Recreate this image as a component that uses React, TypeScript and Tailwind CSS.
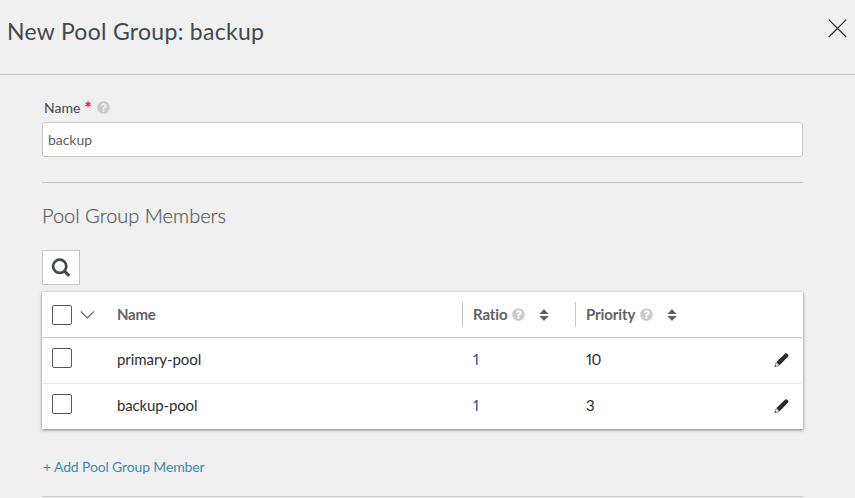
import React from "react";
import { FaQuestionCircle } from "react-icons/fa";

function Help({ className = "" }: { className?: string }) {
  return <FaQuestionCircle className={`size-[13px] shrink-0 text-[#cbcbcb] ${className}`} />;
}

function SortIcon({ className = "" }: { className?: string }) {
  return (
    <svg viewBox="0 0 10 12" className={`h-3 w-[10px] shrink-0 ${className}`} fill="#606365">
      <path d="M5 0L9.7 5H.3zM5 12L.3 7h9.4z" />
    </svg>
  );
}

function Checkbox() {
  return <span className="block size-5 shrink-0 rounded-[2px] border border-[#55585a] bg-white" />;
}

function Pencil() {
  return (
    <svg viewBox="0 0 16 16" className="size-4 shrink-0">
      <path d="M.8 14.6L2 10.6L5.1 13.5z" fill="#fff" stroke="#77777c" strokeWidth=".8" />
      <path d="M.8 14.8l.5-1.7 1.2 1.2z" fill="#2b2a30" />
      <path d="M2.4 10.1L11.2 1.5Q12.2.7 13.2 1.7L14.2 2.8Q14.9 3.7 14.1 4.6L5.6 13.2z" fill="#2b2a30" />
    </svg>
  );
}

const members = [
  { name: "primary-pool", ratio: "1", priority: "10", nameClass: "tracking-[-0.07px]" },
  { name: "backup-pool", ratio: "1", priority: "3", nameClass: "tracking-[-0.15px]" },
];

export default function App() {
  return (
    <div className="h-[498px] w-full overflow-hidden bg-[#f0f0f0] font-['Lato','Liberation_Sans',sans-serif] text-[#42494d]">
      <header className="flex h-[75px] items-start justify-between border-b border-[#c4c4c4] pr-2 pl-[7px]">
        <h1 className="mt-[15px] text-[23px] leading-8 tracking-[0.29px] whitespace-nowrap">New Pool Group: backup</h1>
        <svg viewBox="0 0 20 20" className="mt-[18px] size-5" stroke="#222" strokeWidth="1.15" fill="none">
          <path d="M1.8 1.6l17.4 17.4M19.2 1.6L1.8 19" />
        </svg>
      </header>

      <main className="mr-[52px] ml-[42px]">
        <div className="flex h-[47px] items-start pt-[22px] pl-[2px] text-sm leading-5">
          <span className="pt-px">Name</span>
          <span className="ml-1 w-[8px] text-[18px] leading-[22px] font-bold text-[#f5132a]">*</span>
          <Help className="mt-1 ml-[5px]" />
        </div>
        <div className="flex h-[35px] items-center rounded-[3px] border border-[#c8c8c8] bg-white pl-[5px] text-sm tracking-[-0.05px] text-[#5c5f61]">
          backup
        </div>
        <div className="mt-[25px] border-t border-[#c8c8c8]" />

        <h2 className="mt-[18px] h-7 text-xl leading-7 font-light whitespace-nowrap text-[#5c5f61] [-webkit-text-stroke:0.25px_#5c5f61]">
          Pool Group Members
        </h2>
        <button className="mt-[21px] flex h-[35px] w-[38px] items-center justify-center border border-[#c8c8c8] bg-white">
          <svg viewBox="0 0 20 20" className="size-5" fill="none" stroke="#42494d" strokeWidth="2.7">
            <circle cx="8.7" cy="8.3" r="6.6" />
            <path d="M13.3 12.9l4.9 4.9" strokeWidth="3.1" />
          </svg>
        </button>

        <section className="mt-[7px] h-[137px] bg-white text-[15px] shadow-[0_1px_3px_rgba(0,0,0,0.5)]">
          <div className="mr-px flex h-[46px] items-center border-b border-[#c8c8c8] pl-[10px] font-bold text-[#606365]">
            <div className="flex w-[65px] items-center">
              <Checkbox />
              <svg viewBox="0 0 14 8" className="ml-[8px] h-2 w-[14px]" fill="none" stroke="#606365" strokeWidth="1.1">
                <path d="M.8.5L7.3 6.9 13.8.5" />
              </svg>
            </div>
            <div className="w-[345px] tracking-[-0.25px]">Name</div>
            <div className="flex h-[25px] w-[113px] items-center border-l border-[#c8c8c8] pl-[10px]">
              <span className="w-[39px] tracking-[-0.1px] whitespace-nowrap">Ratio</span>
              <Help />
              <SortIcon className="ml-[14px]" />
            </div>
            <div className="flex h-[25px] items-center border-l border-[#c8c8c8] pl-[10px]">
              <span className="w-[54px] tracking-[-0.1px] whitespace-nowrap">Priority</span>
              <Help />
              <SortIcon className="ml-[14px]" />
            </div>
          </div>
          {members.map((m, i) => (
            <div
              key={m.name}
              className={`mr-px flex items-center pb-[2px] pl-[10px] text-[#2d3033] ${i === 0 ? "h-[46px] border-b border-[#e6e6e6]" : "h-[45px]"}`}
            >
              <div className="w-[65px] pb-1">
                <Checkbox />
              </div>
              <div className={`w-[356px] ${m.nameClass}`}>{m.name}</div>
              <div className="w-[113px] text-[#22597e] proportional-nums">{m.ratio}</div>
              <div className="grow tracking-[-0.4px] proportional-nums">{m.priority}</div>
              <div className="mr-[12px]">
                <Pencil />
              </div>
            </div>
          ))}
        </section>

        <div className="mt-7 h-5 pl-px text-sm leading-5 tracking-[-0.14px] whitespace-nowrap text-[#4089aa]">+ Add Pool Group Member</div>
        <div className="mt-[19px] border-t border-[#c8c8c8]" />
      </main>
    </div>
  );
}
